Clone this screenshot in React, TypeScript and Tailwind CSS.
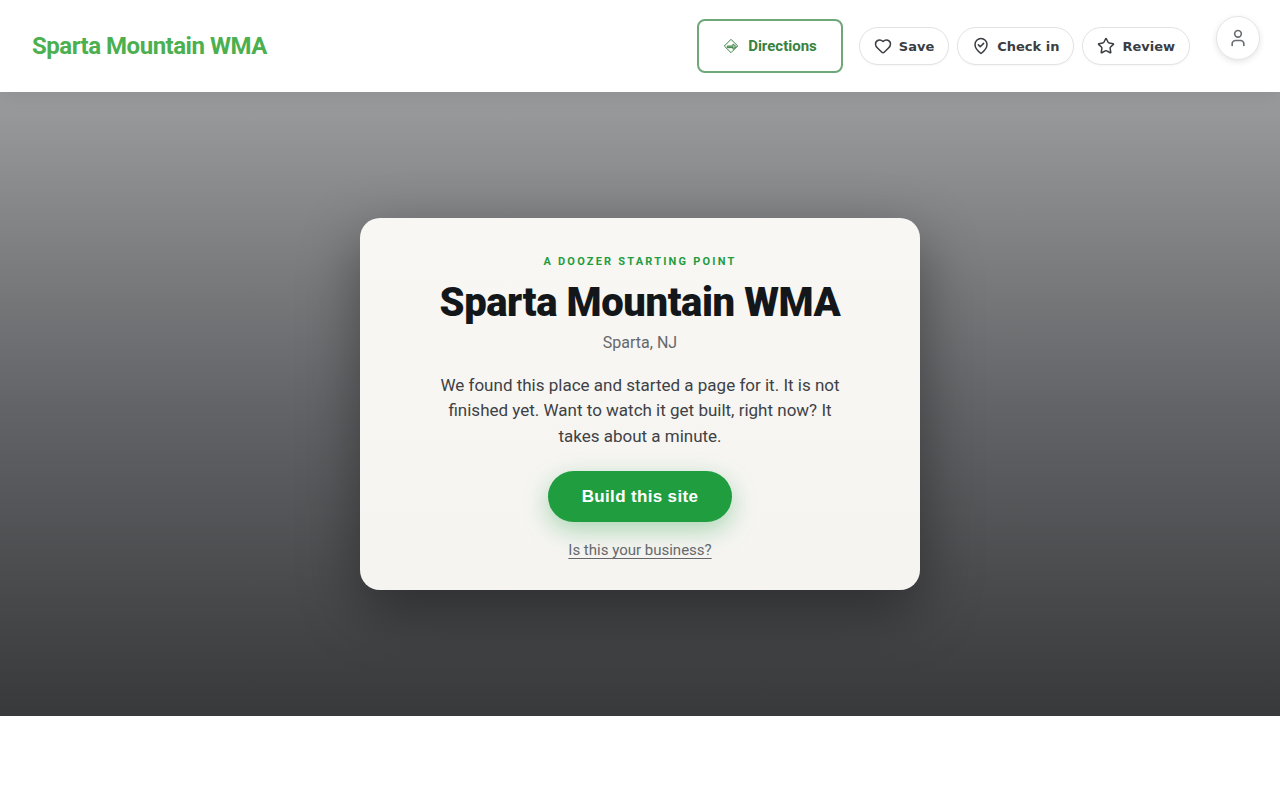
import { Heart, Star, User } from 'lucide-react';
import type { ReactNode } from 'react';

function DirectionsIcon() {
  return (
    <svg
      className="w-4 h-4"
      viewBox="0 0 24 24"
      fill="none"
      stroke="currentColor"
      strokeWidth="1.5"
      strokeLinejoin="round"
      aria-hidden="true"
    >
      <path d="M12 2l10 10-10 10L2 12z" />
      <path d="M6.5 12H15V9l5 4-5 4v-2.5H6.5z" />
      <path d="M7 13.5h11" />
    </svg>
  );
}

function CheckInIcon() {
  return (
    <svg
      className="w-[18px] h-[18px]"
      viewBox="0 0 24 24"
      fill="none"
      stroke="currentColor"
      strokeWidth="2"
      strokeLinecap="round"
      strokeLinejoin="round"
      aria-hidden="true"
    >
      <path d="M12 22s8-6 8-12a8 8 0 0 0-16 0c0 6 8 12 8 12z" />
      <path d="M8.5 10.5l2.5 2.5 4.5-4.5" />
    </svg>
  );
}

function PillButton({ icon, label }: { icon: ReactNode; label: string }) {
  return (
    <button
      type="button"
      className="flex items-center gap-[7px] h-[38px] px-3.5 rounded-full border border-[#e2e3e5] bg-white text-[#3a3d42] text-[13px] leading-[17px] font-bold shadow-[0_1px_2px_rgba(0,0,0,0.04)]"
      style={{ fontFamily: 'DejaVu Sans, sans-serif' }}
    >
      {icon}
      {label}
    </button>
  );
}

function App() {
  return (
    <div className="min-h-screen bg-white" style={{ fontFamily: 'Roboto, sans-serif' }}>

      {/* Header */}
      <header className="relative z-10 flex items-center justify-between min-h-[92px] pl-8 pr-[90px] bg-white shadow-[0_2px_20px_rgba(0,0,0,0.1)]">
        <a href="#" className="text-2xl font-bold tracking-[-0.02em] text-[#4caf50]">
          Sparta Mountain WMA
        </a>

        <nav className="flex items-center gap-4">
          <a
            href="#directions"
            className="flex items-center gap-[9px] h-[54px] px-6 rounded-lg border-2 border-[#6fa878] text-[#388140] text-[15px] leading-[23px] font-bold"
          >
            <DirectionsIcon />
            Directions
          </a>
          <div className="flex items-center gap-2">
            <PillButton icon={<Heart className="w-[18px] h-[18px]" />} label="Save" />
            <PillButton icon={<CheckInIcon />} label="Check in" />
            <PillButton icon={<Star className="w-[18px] h-[18px]" />} label="Review" />
          </div>
        </nav>

        {/* Account button floats over the header corner */}
        <button
          type="button"
          aria-label="Account"
          className="absolute top-4 right-5 flex items-center justify-center w-11 h-11 rounded-full border border-[#e4e5e7] bg-white text-[#6b6e73] shadow-[0_2px_6px_rgba(0,0,0,0.1)]"
        >
          <User className="w-5 h-5" />
        </button>
      </header>

      {/* Hero */}
      <main className="flex items-center justify-center min-h-[78vh] px-6 py-12 bg-linear-to-b from-[#9b9c9d] via-[#636467] to-[#37393b]">
        <section className="flex flex-col items-center w-full max-w-[560px] px-10 pt-[35px] pb-[30px] rounded-[20px] bg-linear-to-b from-[#f8f7f4] to-[#f5f4f1] text-center shadow-[0_20px_60px_rgba(0,0,0,0.4)]">
          <p className="text-[11px] leading-[18px] font-bold tracking-[0.2em] uppercase text-[#1f9d3f]">
            A Doozer starting point
          </p>
          <h1 className="mt-2 text-[40px] leading-[48px] font-black tracking-[-0.01em] text-[#14171a]">
            Sparta Mountain WMA
          </h1>
          <p className="mt-1 text-base text-[#65686b]">Sparta, NJ</p>
          <p className="mt-[18px] max-w-[420px] text-[17px] leading-normal text-[#3e4145]">
            We found this place and started a page for it. It is not finished yet. Want to watch it get built, right now? It takes about a minute.
          </p>
          <button
            type="button"
            className="mt-[22px] h-[51px] px-[34px] rounded-full bg-[#1f9d3f] text-white text-[17px] font-bold tracking-[0.02em] shadow-[0_8px_24px_rgba(31,157,63,0.35)]"
            style={{ fontFamily: 'Liberation Sans, sans-serif' }}
          >
            Build this site
          </button>
          <a href="#claim" className="mt-[18px] text-[15px] leading-5 text-[#65686b] underline underline-offset-[3px]">
            Is this your business?
          </a>
        </section>
      </main>
    </div>
  );
}

export default App;
